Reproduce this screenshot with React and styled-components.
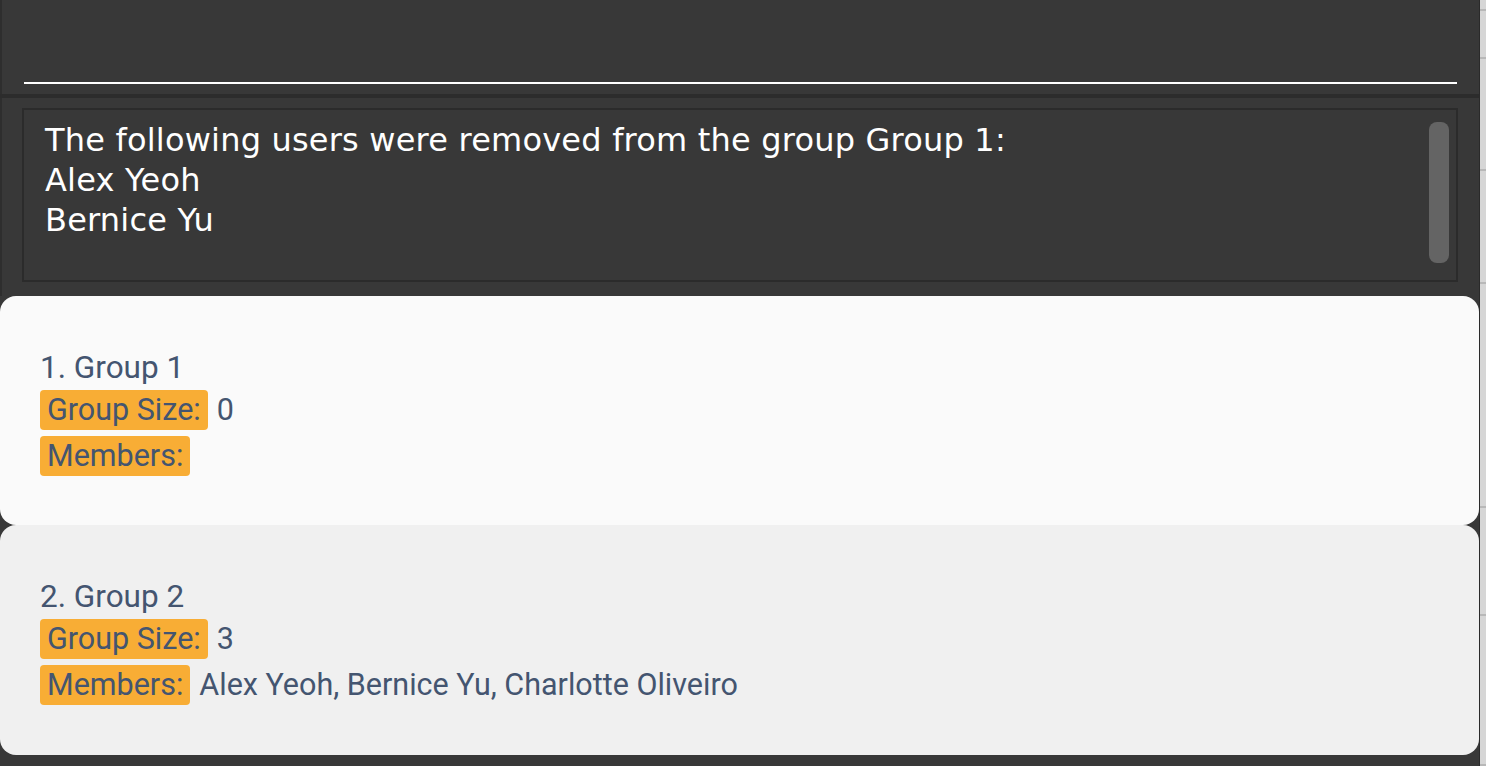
import React from "react";
import styled, { createGlobalStyle } from "styled-components";

const Global = createGlobalStyle`
  html, body { margin: 0; padding: 0; background: #383838; overflow: hidden; }
  #root { width: 1486px; height: 766px; }
`;

const Shell = styled.div`
  display: flex;
  width: 1486px;
  height: 766px;
  background: #383838;
`;

const Main = styled.div`
  flex: 1;
  display: flex;
  flex-direction: column;
  min-width: 0;
  background: #383838;
`;

const CommandBox = styled.div`
  height: 94px;
  box-sizing: border-box;
  border-left: 2px solid #2e2e2e;
  padding: 0 22px 10px 22px;
  display: flex;
  align-items: flex-end;
`;

const CommandInput = styled.input`
  width: 100%;
  height: 30px;
  box-sizing: border-box;
  background: transparent;
  border: none;
  border-bottom: 2px solid #ffffff;
  outline: none;
  color: #ffffff;
  font-family: "DejaVu Sans", sans-serif;
  font-size: 24px;
  padding: 0;
`;

const Separator = styled.div`
  height: 4px;
  background: #2c2c2c;
`;

const ResultPanel = styled.div`
  border-left: 2px solid #2e2e2e;
  padding: 10px 21px 14px 20px;
`;

const ResultBox = styled.div`
  position: relative;
  height: 174px;
  box-sizing: border-box;
  border: 2px solid #2b2b2b;
  padding: 10px 40px 0 21px;
  color: #ffffff;
  font-family: "DejaVu Sans", sans-serif;
  font-size: 32px;
  line-height: 40px;
  white-space: pre-wrap;
  letter-spacing: 0.2px;
`;

const ScrollThumb = styled.div`
  position: absolute;
  top: 12px;
  right: 7px;
  width: 20px;
  height: 141px;
  border-radius: 8px;
  background: #646464;
`;

const CardList = styled.div`
  flex: 1;
  display: flex;
  flex-direction: column;
`;

const Card = styled.div`
  background: ${(p) => (p.$alt ? "#f0f0f0" : "#fafafa")};
  border-radius: 16px;
  height: ${(p) => (p.$alt ? 230 : 229)}px;
  box-sizing: border-box;
  padding: 52px 40px 0 40px;
  display: flex;
  flex-direction: column;
  font-family: Roboto, "Liberation Sans", sans-serif;
  color: #445570;
  font-size: 30.5px;
`;

const Title = styled.div`
  font-size: 31.5px;
  line-height: 40px;
  height: 40px;
  margin-bottom: 2px;
`;

const Row = styled.div`
  display: flex;
  align-items: center;
  gap: 9px;
  height: 40px;
  margin-bottom: 6px;
`;

const Badge = styled.span`
  background: #f8ad35;
  border-radius: 4px;
  height: 40px;
  line-height: 40px;
  padding: 0 7px;
`;

const Value = styled.span`
  line-height: 40px;
`;

const RightStrip = styled.div`
  width: 6px;
  display: flex;
  flex-direction: column;
  border-left: 1px solid #2a2a2a;
  background: #d4d4d4;
`;

const StripCell = styled.div`
  height: ${(p) => p.$h}px;
  box-sizing: border-box;
  border-bottom: 2px solid #b8b8b8;
  background: #d6d6d6;
`;

const groups = [
  { name: "1. Group 1", size: 0, members: "" },
  { name: "2. Group 2", size: 3, members: "Alex Yeoh, Bernice Yu, Charlotte Oliveiro" },
];

const stripCells = [11, 48, 112, 113, 224, 108, 150];

export default function App() {
  return (
    <>
      <Global />
      <Shell>
        <Main>
          <CommandBox>
            <CommandInput defaultValue="" />
          </CommandBox>
          <Separator />
          <ResultPanel>
            <ResultBox>
              {"The following users were removed from the group Group 1:\nAlex Yeoh\nBernice Yu"}
              <ScrollThumb />
            </ResultBox>
          </ResultPanel>
          <CardList>
            {groups.map((g, i) => (
              <Card key={g.name} $alt={i % 2 === 1}>
                <Title>{g.name}</Title>
                <Row>
                  <Badge>Group Size:</Badge>
                  <Value>{g.size}</Value>
                </Row>
                <Row>
                  <Badge>Members:</Badge>
                  {g.members && <Value>{g.members}</Value>}
                </Row>
              </Card>
            ))}
          </CardList>
        </Main>
        <RightStrip>
          {stripCells.map((h, i) => (
            <StripCell key={i} $h={h} />
          ))}
        </RightStrip>
      </Shell>
    </>
  );
}
